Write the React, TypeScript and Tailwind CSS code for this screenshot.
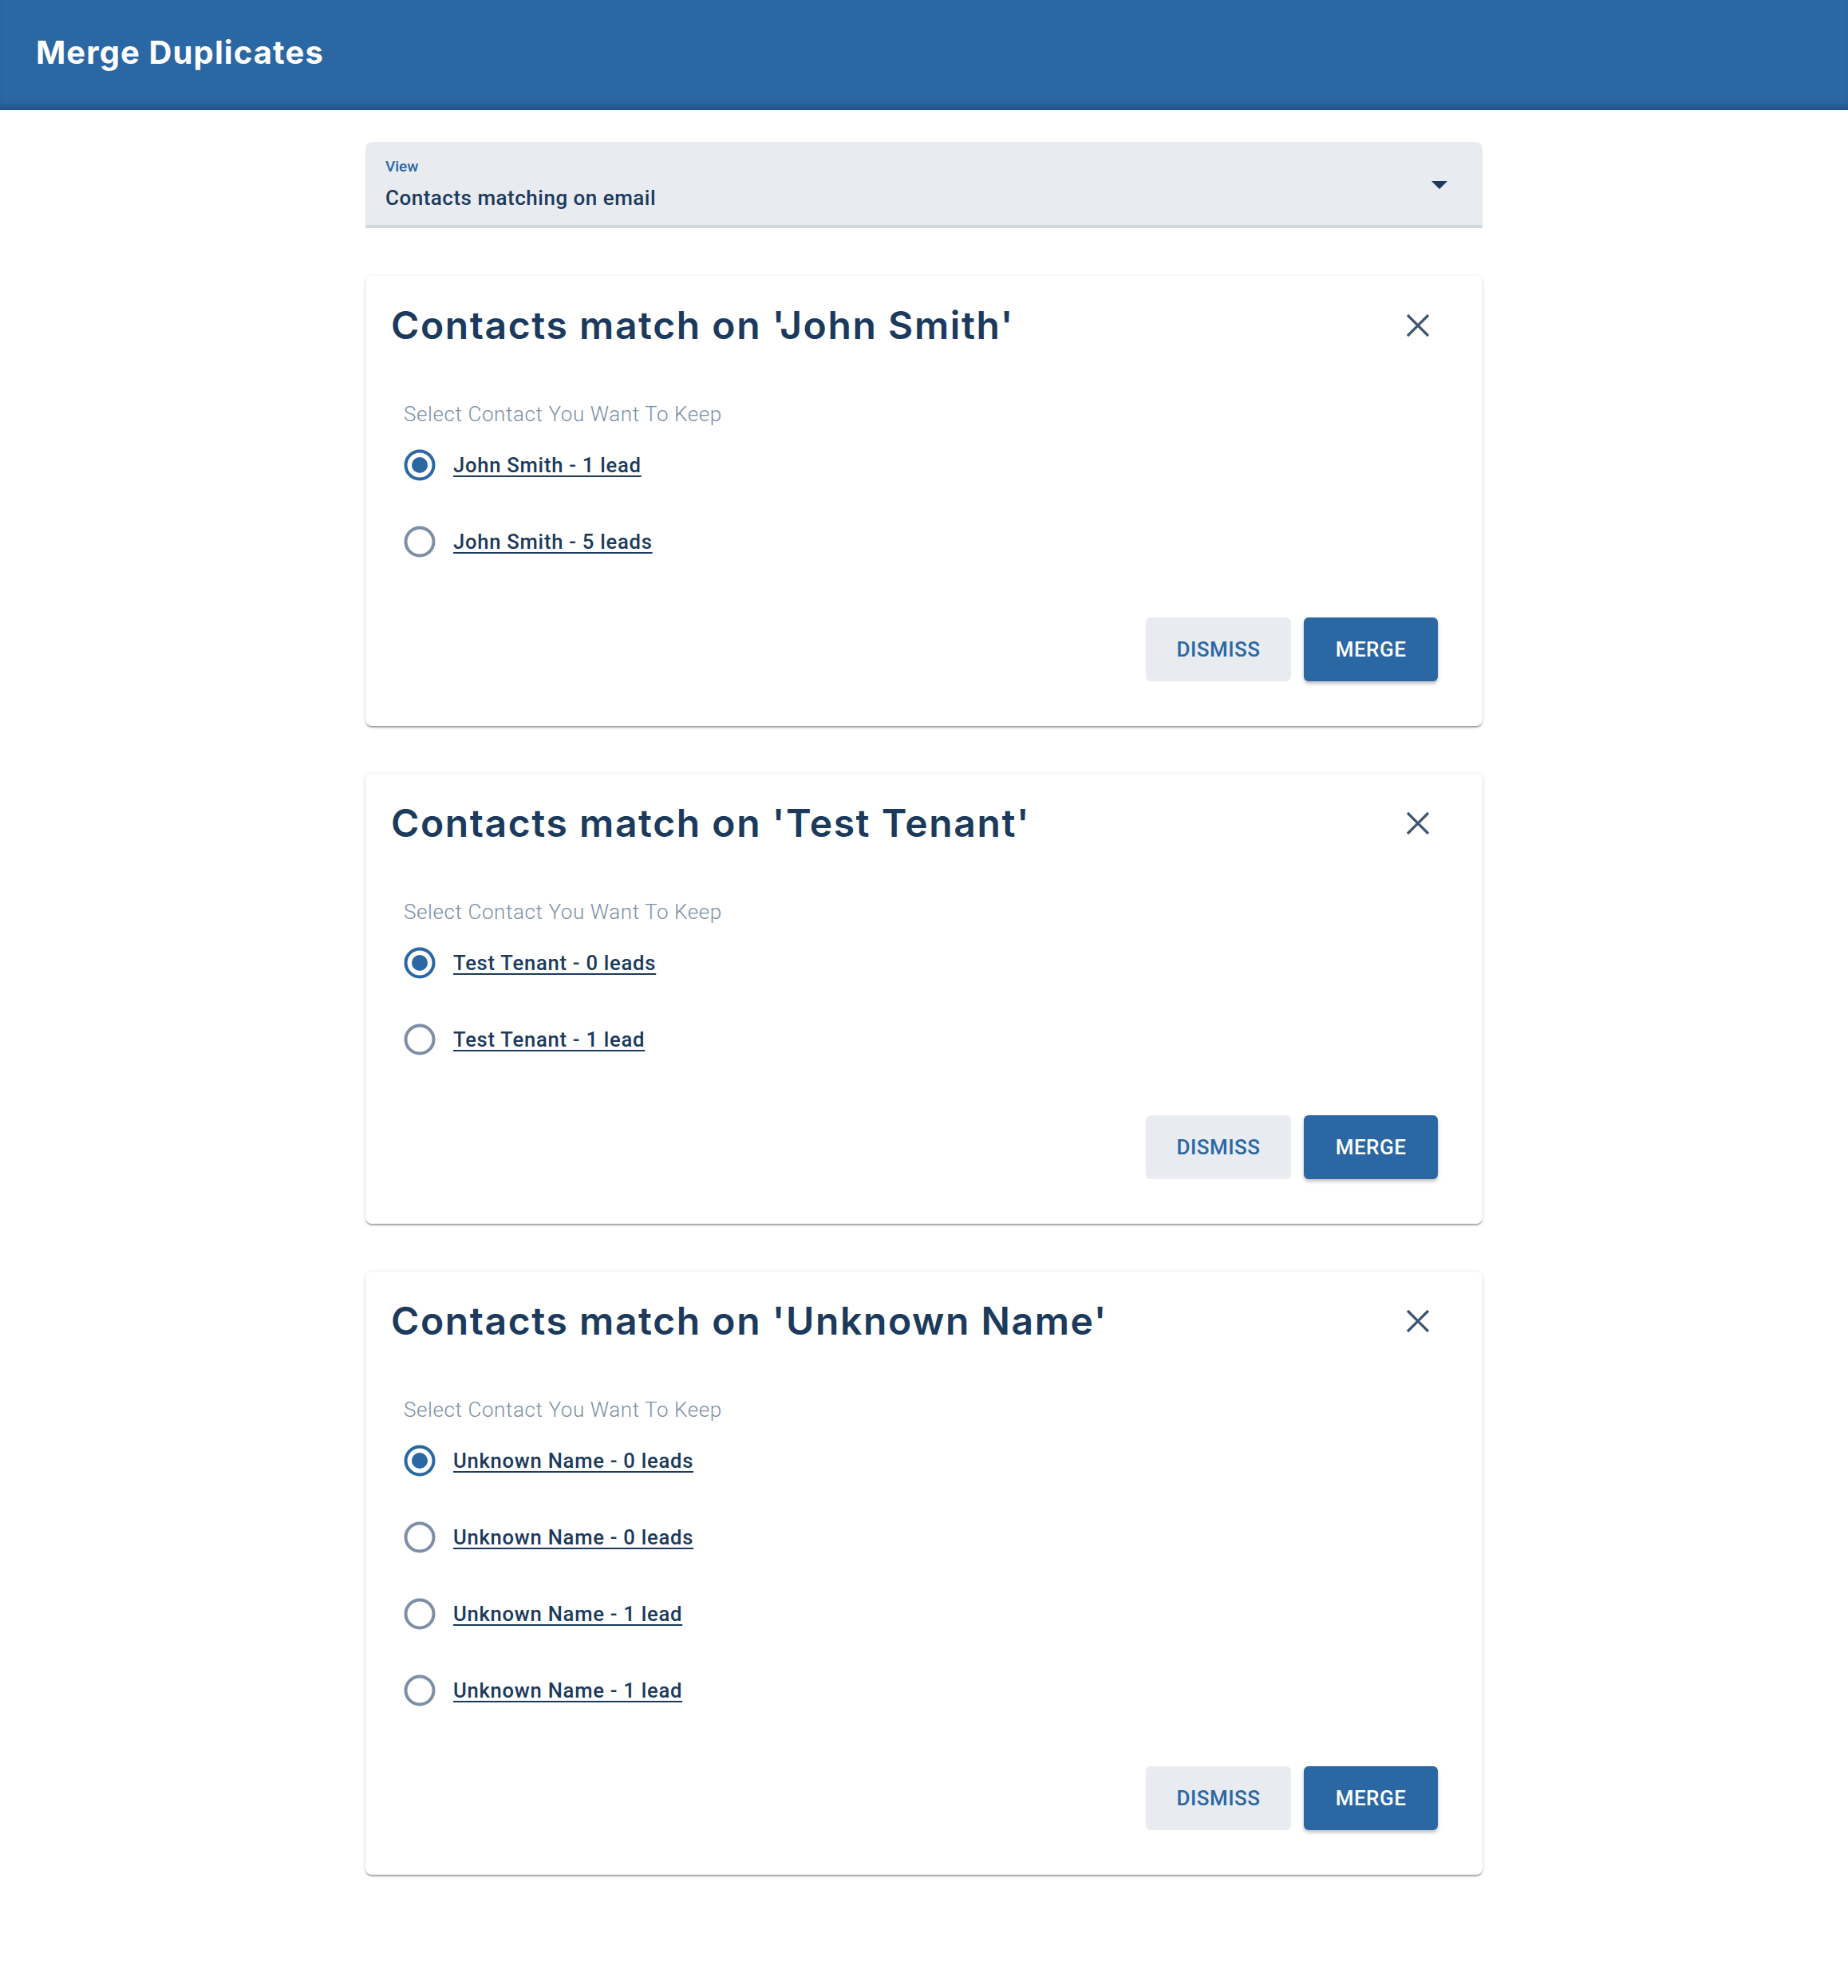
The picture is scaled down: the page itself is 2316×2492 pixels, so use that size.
import React, { useState } from "react";

type Group = {
  name: string;
  options: string[];
};

const groups: Group[] = [
  { name: "John Smith", options: ["John Smith - 1 lead", "John Smith - 5 leads"] },
  { name: "Test Tenant", options: ["Test Tenant - 0 leads", "Test Tenant - 1 lead"] },
  {
    name: "Unknown Name",
    options: [
      "Unknown Name - 0 leads",
      "Unknown Name - 0 leads",
      "Unknown Name - 1 lead",
      "Unknown Name - 1 lead",
    ],
  },
];

function Radio({ checked }: { checked: boolean }) {
  return (
    <svg width="40" height="40" viewBox="0 0 40 40" className="shrink-0">
      <circle
        cx="20"
        cy="20"
        r="17.5"
        fill="none"
        stroke={checked ? "#2a67a3" : "#7d8fa6"}
        strokeWidth="4"
      />
      {checked && <circle cx="20" cy="20" r="10" fill="#2a67a3" />}
    </svg>
  );
}

function CloseIcon() {
  return (
    <svg width="30" height="30" viewBox="0 0 30 30">
      <path d="M2 2 L28 28 M28 2 L2 28" stroke="#3e556f" strokeWidth="3.2" strokeLinecap="butt" />
    </svg>
  );
}

function MatchCard({ group }: { group: Group }) {
  const [selected, setSelected] = useState(0);
  return (
    <div className="rounded-[8px] bg-white shadow-[0_3px_2px_-1px_rgba(0,0,0,0.25),0_1px_2px_0_rgba(0,0,0,0.14),0_1px_5px_0_rgba(0,0,0,0.12)] pt-[32px] pb-[56px]">
      <div className="flex items-center justify-between pl-[32px] pr-[66px] h-[60px]">
        <h2 className="font-['Inter',sans-serif] font-semibold text-[48px] leading-[60px] tracking-[1.6px] text-[#1b3a5c]">
          Contacts match on '{group.name}'
        </h2>
        <button className="flex items-center justify-center">
          <CloseIcon />
        </button>
      </div>
      <div className="pl-[48px] pt-[65px]">
        <div className="font-['Roboto',sans-serif] font-light text-[26px] leading-[32px] tracking-[0.6px] text-[#7b8ea6]">
          Select Contact You Want To Keep
        </div>
        <div className="flex flex-col">
          {group.options.map((opt, i) => (
            <label
              key={i}
              className="flex items-center h-[96px] gap-[22px] cursor-pointer"
              onClick={() => setSelected(i)}
            >
              <Radio checked={selected === i} />
              <span className="font-['Roboto',sans-serif] font-medium text-[25.6px] tracking-[0.75px] text-[#1b3a5c] underline decoration-[2px] underline-offset-[4px]">
                {opt}
              </span>
            </label>
          ))}
        </div>
      </div>
      <div className="flex justify-end gap-[16px] pr-[56px] pt-[47px]">
        <button className="h-[80px] w-[182px] rounded-[6px] bg-[#e8ebf0] font-['Roboto',sans-serif] font-medium text-[26px] tracking-[0.5px] text-[#2a67a3]">
          DISMISS
        </button>
        <button className="h-[80px] w-[168px] rounded-[6px] bg-[#2a67a3] font-['Roboto',sans-serif] font-medium text-[26px] tracking-[0.5px] text-white shadow-[0_3px_4px_rgba(0,0,0,0.25)]">
          MERGE
        </button>
      </div>
    </div>
  );
}

export default function App() {
  return (
    <div className="min-h-[2492px] bg-white">
      <header className="h-[138px] bg-[#2a67a3] flex items-center px-[45px] pb-[6px] shadow-[inset_0_-10px_10px_-6px_rgba(0,0,0,0.22)]">
        <h1 className="font-['Inter',sans-serif] font-bold text-[40px] tracking-[1.1px] text-white">
          Merge Duplicates
        </h1>
      </header>
      <main className="mx-auto w-[1400px] pt-[40px] pb-[140px] flex flex-col gap-[60px]">
        <div className="relative h-[108px] rounded-t-[8px] bg-[#e8ebf0] border-b-[4px] border-[#d0d6de] pl-[25px] pt-[19px]">
          <div className="font-['Roboto',sans-serif] font-medium text-[19px] leading-[24px] text-[#2a67a3]">View</div>
          <div className="font-['Roboto',sans-serif] font-medium text-[26px] leading-[38px] tracking-[0.5px] text-[#1b3a5c] mt-[8px]">
            Contacts matching on email
          </div>
          <svg
            className="absolute right-[44px] top-[49px]"
            width="20"
            height="10"
            viewBox="0 0 20 10"
          >
            <path d="M0 0 L20 0 L10 10 Z" fill="#1b3a5c" />
          </svg>
        </div>
        {groups.map((g, i) => (
          <MatchCard key={i} group={g} />
        ))}
      </main>
    </div>
  );
}
